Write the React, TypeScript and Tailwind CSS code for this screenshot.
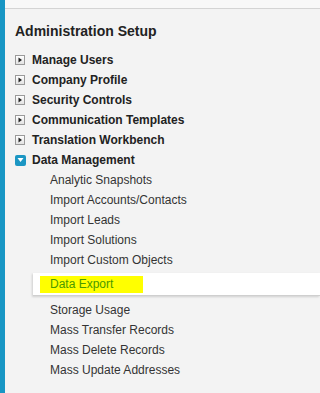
const sections = [
  'Manage Users',
  'Company Profile',
  'Security Controls',
  'Communication Templates',
  'Translation Workbench',
];

const beforeExport = [
  'Analytic Snapshots',
  'Import Accounts/Contacts',
  'Import Leads',
  'Import Solutions',
  'Import Custom Objects',
];

const afterExport = [
  'Storage Usage',
  'Mass Transfer Records',
  'Mass Delete Records',
  'Mass Update Addresses',
];

const ClosedIcon = () => (
  <span className="w-[10px] h-[10px] border border-[#9a9a9a] bg-gradient-to-b from-white to-[#e2e2e2] flex items-center justify-center shrink-0">
    <svg width="6" height="6" viewBox="0 0 6 6">
      <path d="M1.5 0.5 L5 3 L1.5 5.5 Z" fill="#222" />
    </svg>
  </span>
);

const OpenIcon = () => (
  <span className="w-[11px] h-[11px] rounded-[2px] bg-[#1b96c3] flex items-center justify-center shrink-0">
    <svg width="7" height="6" viewBox="0 0 7 6">
      <path d="M0.5 1 L6.5 1 L3.5 5 Z" fill="#fff" />
    </svg>
  </span>
);

const SubItem = ({ label }: { label: string }) => (
  <div className="h-[20px] flex items-center pl-[45px] text-[12px] text-[#333] whitespace-nowrap">{label}</div>
);

export default function App() {
  return (
    <div
      className="w-full min-w-[223px] h-[393px] flex bg-[#f3f3f3] overflow-hidden"
      style={{ fontFamily: '"Liberation Sans", Arial, sans-serif' }}
    >
      <div className="w-[5px] shrink-0 bg-[#1896c4]" />
      <div className="flex-1 flex flex-col">
        <div className="h-[9px] bg-[#f8f8f8] border-b border-[#d4d4d4]" />
        <h1 className="mt-[14px] pl-[10px] text-[14px] leading-[16px] font-bold text-[#222] whitespace-nowrap">
          Administration Setup
        </h1>
        <div className="mt-[11px] flex flex-col">
          {sections.map((s) => (
            <div key={s} className="h-[20px] flex items-center gap-[7px] pl-[10px] whitespace-nowrap">
              <ClosedIcon />
              <span className="text-[12px] font-bold text-[#222]">{s}</span>
            </div>
          ))}
          <div className="h-[20px] flex items-center gap-[6px] pl-[10px] whitespace-nowrap">
            <OpenIcon />
            <span className="text-[12px] font-bold text-[#222]">Data Management</span>
          </div>
          {beforeExport.map((s) => (
            <SubItem key={s} label={s} />
          ))}
          <div className="mt-[3px] ml-[28px] h-[23px] bg-white border-b border-[#cfcfcf] shadow-[-1px_1px_2px_rgba(0,0,0,0.15)] flex items-center pl-[7px]">
            <span className="bg-[#ffff00] h-[17px] w-[103px] flex items-center pl-[10px] text-[12px] text-[#4b9a00] whitespace-nowrap">
              Data Export
            </span>
          </div>
          <div className="mt-[4px] flex flex-col">
            {afterExport.map((s) => (
              <SubItem key={s} label={s} />
            ))}
          </div>
        </div>
      </div>
    </div>
  );
}
